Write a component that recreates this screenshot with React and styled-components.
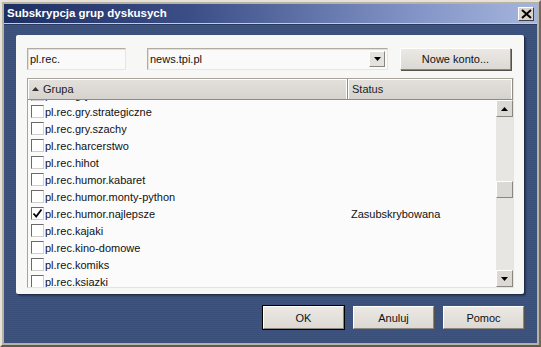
import React from 'react'
import styled, { createGlobalStyle } from 'styled-components'

const GlobalStyle = createGlobalStyle`
  html, body {
    margin: 0;
    padding: 0;
    background: #d4d0c8;
  }
  body {
    font-family: "Liberation Sans", Arial, sans-serif;
  }
`

const groups = [
  { name: 'pl.rec.gry.inne', checked: false, status: '' },
  { name: 'pl.rec.gry.strategiczne', checked: false, status: '' },
  { name: 'pl.rec.gry.szachy', checked: false, status: '' },
  { name: 'pl.rec.harcerstwo', checked: false, status: '' },
  { name: 'pl.rec.hihot', checked: false, status: '' },
  { name: 'pl.rec.humor.kabaret', checked: false, status: '' },
  { name: 'pl.rec.humor.monty-python', checked: false, status: '' },
  { name: 'pl.rec.humor.najlepsze', checked: true, status: 'Zasubskrybowana' },
  { name: 'pl.rec.kajaki', checked: false, status: '' },
  { name: 'pl.rec.kino-domowe', checked: false, status: '' },
  { name: 'pl.rec.komiks', checked: false, status: '' },
  { name: 'pl.rec.ksiazki', checked: false, status: '' },
]

function App() {
  return (
    <>
      <GlobalStyle />
      <Window>
        <TitleBar>
          <Title>Subskrypcja grup dyskusych</Title>
          <CloseBtn>
            <svg width="11" height="10" viewBox="0 0 11 10">
              <path d="M1 1 L10 9 M10 1 L1 9" stroke="#000" strokeWidth="2" />
            </svg>
          </CloseBtn>
        </TitleBar>
        <Body>
          <Panel>
            <TopRow>
              <TextInput>pl.rec.</TextInput>
              <Combo>
                <span>news.tpi.pl</span>
                <ComboArrow>
                  <svg width="7" height="4" viewBox="0 0 7 4">
                    <path d="M0 0 H7 L3.5 4 Z" fill="#000" />
                  </svg>
                </ComboArrow>
              </Combo>
              <Button width="111px" height="22px">Nowe konto...</Button>
            </TopRow>
            <List>
              <Header>
                <HeaderCell width="320px">
                  <svg width="7" height="4" viewBox="0 0 7 4">
                    <path d="M0 4 H7 L3.5 0 Z" fill="#333" />
                  </svg>
                  Grupa
                </HeaderCell>
                <HeaderCell flex>Status</HeaderCell>
              </Header>
              <ListBody>
                <Rows>
                  <RowsInner>
                    {groups.map((g) => (
                      <Row key={g.name}>
                        <NameCell>
                          <Check>
                            {g.checked && (
                              <svg width="11" height="11" viewBox="0 0 11 11">
                                <path d="M1.5 5.5 L4.2 8.5 L9.5 1.5" stroke="#000" strokeWidth="1.8" fill="none" />
                              </svg>
                            )}
                          </Check>
                          {g.name}
                        </NameCell>
                        <StatusCell>{g.status}</StatusCell>
                      </Row>
                    ))}
                  </RowsInner>
                </Rows>
                <ScrollBar>
                  <ScrollBtn>
                    <svg width="7" height="4" viewBox="0 0 7 4">
                      <path d="M0 4 H7 L3.5 0 Z" fill="#000" />
                    </svg>
                  </ScrollBtn>
                  <Track>
                    <Thumb />
                  </Track>
                  <ScrollBtn>
                    <svg width="7" height="4" viewBox="0 0 7 4">
                      <path d="M0 0 H7 L3.5 4 Z" fill="#000" />
                    </svg>
                  </ScrollBtn>
                </ScrollBar>
              </ListBody>
            </List>
          </Panel>
          <Footer>
            <Button width="81px" height="23px" primary>OK</Button>
            <Button width="81px" height="23px">Anuluj</Button>
            <Button width="81px" height="23px">Pomoc</Button>
          </Footer>
        </Body>
      </Window>
    </>
  )
}

export default App

const Window = styled.div`
  width: 541px;
  height: 347px;
  box-sizing: border-box;
  border: 2px solid #e6e2da;
  border-right-color: #6e6a62;
  border-bottom-color: #5e5a52;
  background: #b8b2a4;
  padding: 2px;
  display: flex;
  flex-direction: column;
`

const TitleBar = styled.div`
  height: 19px;
  flex: none;
  display: flex;
  align-items: center;
  justify-content: space-between;
  padding: 0 3px 0 3px;
  background: linear-gradient(to right, #1e2f62 0%, #3b4e86 35%, #7f91c4 75%, #a5b5dd 100%);
  border-bottom: 1px solid #c9c9d8;
`

const Title = styled.div`
  color: #fff;
  font-family: "Liberation Sans", Arial, sans-serif;
  font-weight: bold;
  font-size: 11.5px;
  margin-top: -1px;
`

const CloseBtn = styled.div`
  width: 16px;
  height: 14px;
  box-sizing: border-box;
  background: #d8d4cc;
  border: 1px solid #fff;
  border-right-color: #404040;
  border-bottom-color: #404040;
  display: flex;
  align-items: center;
  justify-content: center;
`

const Body = styled.div`
  flex: 1;
  display: flex;
  flex-direction: column;
  background: repeating-linear-gradient(to bottom, #3e5480 0px, #3e5480 1px, #3a4f7a 1px, #3a4f7a 2px);
  padding: 10px 13px 0 12px;
  border-top: 1px solid #2a3a5e;
`

const Panel = styled.div`
  height: 259px;
  box-sizing: border-box;
  background: #f7f7f5;
  border-radius: 2px;
  box-shadow: 1px 1px 0 #1e2c48, 2px 2px 2px rgba(0, 0, 0, 0.35);
  padding: 12px 10px 0 11px;
  display: flex;
  flex-direction: column;
`

const TopRow = styled.div`
  display: flex;
  align-items: center;
  height: 23px;
  margin-bottom: 8px;
`

const fieldBase = `
  box-sizing: border-box;
  height: 22px;
  background: #fafafa;
  border: 1px solid #b0aca4;
  border-right-color: #e8e6e2;
  border-bottom-color: #e8e6e2;
  box-shadow: inset 1px 1px 0 #e2e0dc;
  font-family: "Liberation Sans", Arial, sans-serif;
  font-size: 11px;
  color: #111;
  display: flex;
  align-items: center;
  padding-left: 2px;
`

const TextInput = styled.div`
  ${fieldBase}
  width: 99px;
  margin-right: 21px;
`

const Combo = styled.div`
  ${fieldBase}
  width: 241px;
  justify-content: space-between;
  padding-right: 2px;
  margin-right: 12px;
`

const ComboArrow = styled.div`
  width: 16px;
  height: 16px;
  box-sizing: border-box;
  background: #e4e2de;
  border: 1px solid #fff;
  border-right-color: #8a8680;
  border-bottom-color: #8a8680;
  display: flex;
  align-items: center;
  justify-content: center;
`

const Button = styled.div`
  width: ${(p) => p.width};
  height: ${(p) => p.height};
  box-sizing: border-box;
  background: linear-gradient(to bottom, #ece9e5 0%, #dcd8d4 100%);
  border: 1px solid #fff;
  border-right-color: #8a8680;
  border-bottom-color: #8a8680;
  outline: ${(p) => (p.primary ? '1px solid #000' : 'none')};
  box-shadow: ${(p) => (p.primary ? '1px 1px 0 #000' : '1px 1px 0 #55524c')};
  display: flex;
  align-items: center;
  justify-content: center;
  font-family: "Liberation Sans", Arial, sans-serif;
  font-size: 11px;
  color: #111;
`

const List = styled.div`
  flex: 1;
  min-height: 0;
  box-sizing: border-box;
  border: 1px solid #a8a49c;
  border-right-color: #e6e4e0;
  border-bottom-color: #e6e4e0;
  display: flex;
  flex-direction: column;
  overflow: hidden;
  margin-bottom: 6px;
`

const Header = styled.div`
  display: flex;
  height: 20px;
  flex: none;
  background: linear-gradient(to bottom, #e4e1dd, #d6d2ce);
  border-bottom: 1px solid #8f8b85;
`

const HeaderCell = styled.div`
  width: ${(p) => p.width || 'auto'};
  flex: ${(p) => (p.flex ? 1 : 'none')};
  box-sizing: border-box;
  display: flex;
  align-items: center;
  gap: 4px;
  padding-left: 4px;
  font-family: "Liberation Sans", Arial, sans-serif;
  font-size: 11px;
  color: #222;
  border-right: 1px solid #8f8b85;
  box-shadow: inset -1px 0 0 #fff, inset 1px 1px 0 #fff;
`

const ListBody = styled.div`
  flex: 1;
  min-height: 0;
  display: flex;
  background: #fbfbfb;
`

const Rows = styled.div`
  flex: 1;
  overflow: hidden;
`

const RowsInner = styled.div`
  margin-top: -14px;
`

const Row = styled.div`
  height: 17px;
  display: flex;
  align-items: center;
  font-family: "Liberation Sans", Arial, sans-serif;
  font-size: 11px;
  color: #111;
`

const NameCell = styled.div`
  width: 320px;
  display: flex;
  align-items: center;
  gap: 1px;
  padding-left: 3px;
  box-sizing: border-box;
`

const StatusCell = styled.div`
  flex: 1;
  padding-left: 3px;
`

const Check = styled.div`
  width: 13px;
  height: 13px;
  box-sizing: border-box;
  border: 1px solid #6c6a66;
  border-right-color: #d0cec8;
  border-bottom-color: #d0cec8;
  background: #fff;
  display: flex;
  align-items: center;
  justify-content: center;
`

const ScrollBar = styled.div`
  width: 17px;
  flex: none;
  display: flex;
  flex-direction: column;
  background: #e8e6e2;
`

const ScrollBtn = styled.div`
  height: 17px;
  flex: none;
  box-sizing: border-box;
  background: #dcd9d5;
  border: 1px solid #fff;
  border-right-color: #8a8680;
  border-bottom-color: #8a8680;
  display: flex;
  align-items: center;
  justify-content: center;
`

const Track = styled.div`
  flex: 1;
  padding-top: 64px;
  box-sizing: border-box;
`

const Thumb = styled.div`
  height: 17px;
  box-sizing: border-box;
  background: #dcd9d5;
  border: 1px solid #fff;
  border-right-color: #8a8680;
  border-bottom-color: #8a8680;
`

const Footer = styled.div`
  flex: 1;
  display: flex;
  justify-content: flex-end;
  align-items: center;
  gap: 9px;
  padding-bottom: 2px;
`
